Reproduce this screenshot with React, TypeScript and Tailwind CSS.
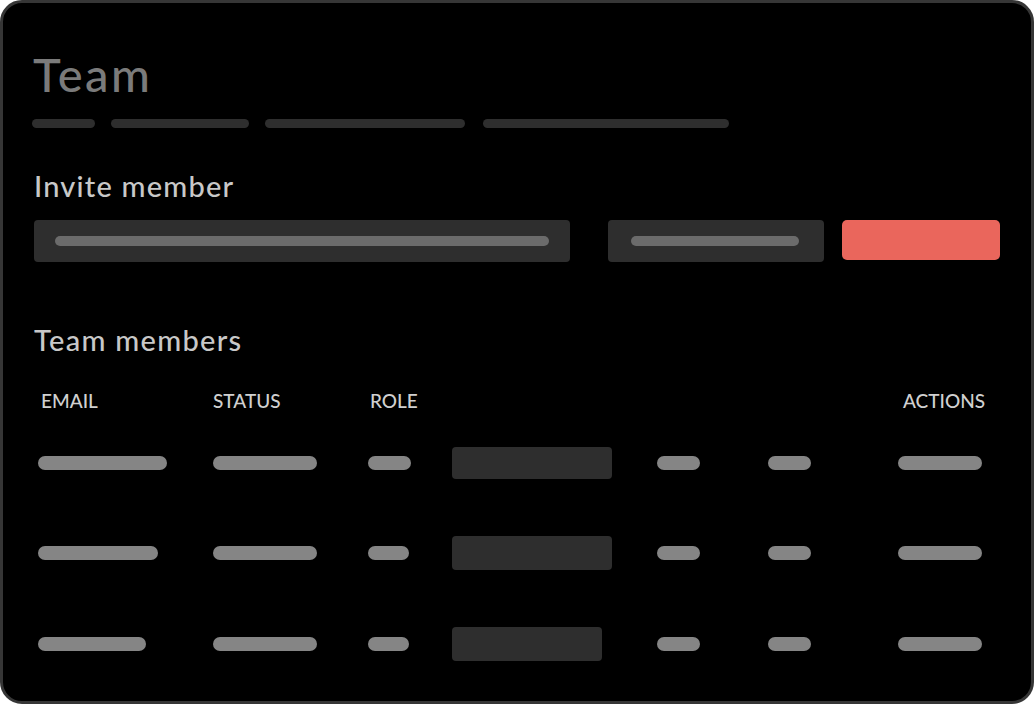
import React from "react";

const Bar = ({ w, className = "" }: { w: string; className?: string }) => (
  <div className={`h-[14px] rounded-full bg-[#858585] ${w} ${className}`} />
);

const rows = [
  { email: "w-[129px]", role: "w-[43px]", box: "w-[160px] h-[32px]" },
  { email: "w-[120px]", role: "w-[41px]", box: "w-[160px] h-[34px]" },
  { email: "w-[108px]", role: "w-[41px]", box: "w-[150px] h-[34px]" },
];

export default function App() {
  return (
    <div className="w-[1034px] h-[705px] bg-white" style={{ fontFamily: "Lato, 'Noto Sans', sans-serif" }}>
      <div className="w-[1034px] h-[704px] rounded-[22px] border-[3px] border-[#363636] bg-black flex flex-col pl-[29px] pr-[31px]">
        <h1 className="mt-[42px] ml-[1px] text-[47px] leading-[58px] font-medium tracking-[2.5px] text-[#7b7b7b]">Team</h1>
        <div className="mt-[16px] flex gap-[16px]">
          <div className="h-[9px] w-[63px] rounded-full bg-[#2e2e2e]" />
          <div className="h-[9px] w-[138px] rounded-full bg-[#2e2e2e]" />
          <div className="h-[9px] w-[200px] rounded-full bg-[#2e2e2e]" />
          <div className="ml-[2px] h-[9px] w-[246px] rounded-full bg-[#2e2e2e]" />
        </div>
        <h2 className="mt-[41px] ml-[2px] text-[29px] leading-[34px] font-medium tracking-[1.2px] text-[#c8c8c8]">Invite member</h2>
        <div className="mt-[17px] ml-[2px] flex items-start">
          <div className="w-[536px] h-[42px] rounded-[4px] bg-[#2e2e2e] flex items-center px-[21px]">
            <div className="h-[10px] w-full rounded-full bg-[#6b6b6b]" />
          </div>
          <div className="ml-[38px] w-[216px] h-[42px] rounded-[4px] bg-[#2e2e2e] flex items-center pl-[23px] pr-[25px]">
            <div className="h-[10px] w-full rounded-full bg-[#6b6b6b]" />
          </div>
          <div className="ml-[18px] w-[158px] h-[40px] rounded-[5px] bg-[#ea665c]" />
        </div>
        <h2 className="mt-[61px] ml-[2px] text-[29px] leading-[34px] font-medium tracking-[1.3px] text-[#c8c8c8]">Team members</h2>
        <div className="mt-[33px] ml-[6px] grid grid-cols-[175px_155px_84px_205px_111px_130px_1fr] items-center">
          <div className="ml-[3px] text-[19px] leading-[22px] font-medium text-[#d0d0d0]">EMAIL</div>
          <div className="text-[19px] leading-[22px] font-medium text-[#d0d0d0]">STATUS</div>
          <div className="ml-[2px] text-[19px] leading-[22px] font-medium text-[#d0d0d0]">ROLE</div>
          <div />
          <div />
          <div />
          <div className="ml-[5px] text-[19px] leading-[22px] font-medium text-[#d0d0d0]">ACTIONS</div>
        </div>
        <div className="mt-[35px] ml-[6px] flex flex-col gap-[57px]">
          {rows.map((r, i) => (
            <div key={i} className="grid grid-cols-[175px_155px_84px_205px_111px_130px_1fr] items-center">
              <Bar w={r.email} />
              <Bar w="w-[104px]" />
              <Bar w={r.role} />
              <div className={`rounded-[4px] bg-[#2e2e2e] ${r.box}`} />
              <Bar w="w-[43px]" />
              <Bar w="w-[43px]" />
              <Bar w="w-[84px]" />
            </div>
          ))}
        </div>
      </div>
    </div>
  );
}
